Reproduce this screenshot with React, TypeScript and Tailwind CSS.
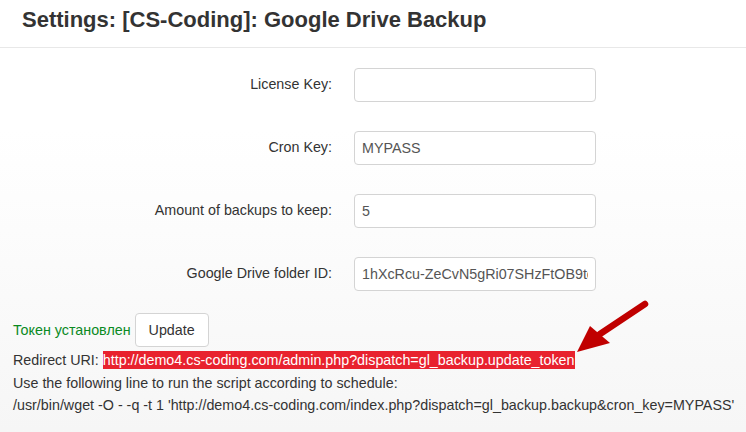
const fields = [
  { label: "License Key:", value: "" },
  { label: "Cron Key:", value: "MYPASS" },
  { label: "Amount of backups to keep:", value: "5" },
  { label: "Google Drive folder ID:", value: "1hXcRcu-ZeCvN5gRi07SHzFtOB9te1" },
];

const Arrow = () => (
  <svg
    className="absolute left-[570px] top-[297px]"
    width="82"
    height="62"
    viewBox="0 0 82 62"
  >
    <path d="M75 7 L30 37" stroke="#c00000" strokeWidth="6.5" strokeLinecap="round" />
    <polygon points="7,55 20,29 40,46" fill="#c00000" />
  </svg>
);

const App = () => {
  return (
    <div className="relative w-[746px] h-[432px] overflow-hidden bg-gradient-to-b from-white from-30% to-[#f6f6f6] text-[#333] font-['Liberation_Sans',Arial,sans-serif]">
      <div className="h-[48px] border-b border-[#e8e8e8] bg-white px-[22px] pt-[6px]">
        <h1 className="text-[22px] font-bold leading-[28px] text-[#333]">
          Settings: [CS-Coding]: Google Drive Backup
        </h1>
      </div>

      <div className="flex flex-col gap-[29px] pt-[20px]">
        {fields.map((f) => (
          <div key={f.label} className="flex items-center h-[34px]">
            <label className="w-[332px] text-right text-[14.3px]">{f.label}</label>
            <input
              readOnly
              value={f.value}
              className="ml-[22px] w-[242px] h-[34px] rounded-[4px] border border-[#d4d4d4] bg-white px-[7px] text-[14.3px] text-[#555] outline-none"
            />
          </div>
        ))}
      </div>

      <div className="px-[13px] pt-[22px] text-[14.3px] leading-[22.5px] whitespace-nowrap">
        <div className="flex items-center gap-[4px] h-[34px]">
          <span className="text-[#0a8a1f]">Токен установлен</span>
          <button className="h-[34px] px-[13px] rounded-[4px] border border-[#d4d4d4] bg-white text-[14.3px] text-[#333]">
            Update
          </button>
        </div>
        <div className="mt-[2px]">
          Redirect URI:{" "}
          <span className="bg-[#e8222e] text-white py-[1px]">
            http://demo4.cs-coding.com/admin.php?dispatch=gl_backup.update_token
          </span>
        </div>
        <div>Use the following line to run the script according to schedule:</div>
        <div>
          /usr/bin/wget -O - -q -t 1 'http://demo4.cs-coding.com/index.php?dispatch=gl_backup.backup&amp;cron_key=MYPASS'
        </div>
      </div>

      <Arrow />
    </div>
  );
};

export default App;
